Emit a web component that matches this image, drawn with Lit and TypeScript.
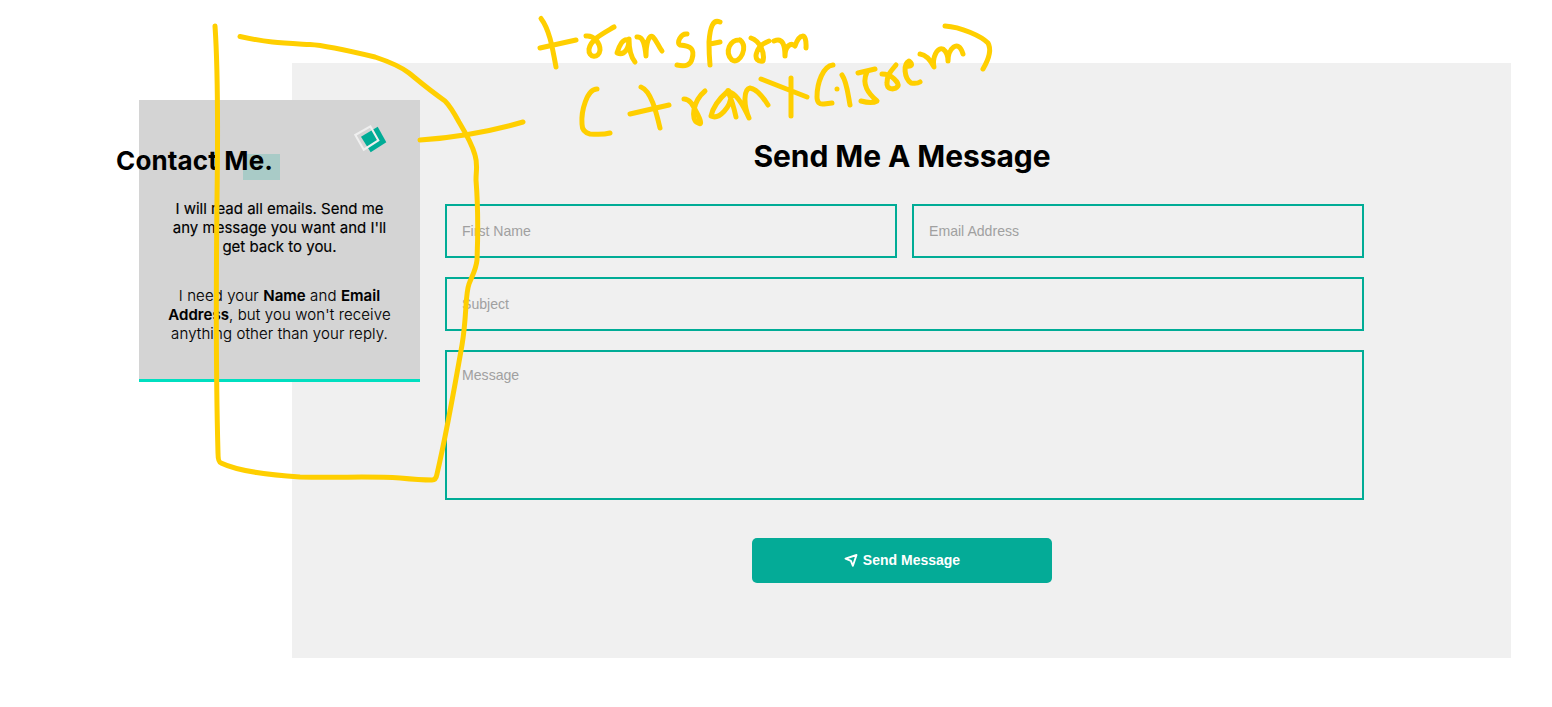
import { LitElement, html, css } from "lit";
import { customElement } from "lit/decorators.js";

@customElement("app-root")
export class AppRoot extends LitElement {
  static styles = css`
    :host { display: block; position: relative; height: 707px; overflow: hidden; background: #fff; color: #000; font-family: Inter, sans-serif; }
    * { box-sizing: border-box; }
    .page { padding: 63px 41px 0 292px; }
    .contact { display: flex; align-items: flex-start; height: 595px; background: #f0f0f0; }
    .card { flex: none; width: 281px; height: 282px; margin: 37px 25px 0 -153px; padding: 25px 28px 0; background: #d4d4d4; border-bottom: 3px solid #00dfc0; text-align: center; }
    .logo { display: block; width: 34px; height: 30px; margin: 0 0 0 186px; }
    .heading { display: flex; margin: -17px 0 0 -51px; height: 46px; }
    .heading h2 { position: relative; isolation: isolate; margin: 0; font-size: 26px; line-height: 46px; font-weight: 700; letter-spacing: .15px; white-space: nowrap; }
    .mark { position: absolute; z-index: -1; left: 127px; top: 16px; width: 37px; height: 26px; background: rgba(0, 172, 150, .2); }
    .card p { margin: 0 -5px; font-size: 15px; line-height: 19px; white-space: nowrap; }
    .card .lead { margin-top: 15px; font-weight: 400; -webkit-text-stroke: .15px #000; }
    .card .note { margin-top: 30px; font-weight: 300; letter-spacing: .12px; -webkit-text-stroke: .12px #000; }
    .note b { font-weight: 600; letter-spacing: .05px; }
    .form { width: 919px; padding-top: 73px; }
    .title { margin: 0 5px 28px 0; height: 40px; text-align: center; font-size: 30px; line-height: 40px; font-weight: 700; letter-spacing: -.08px; }
    .fields { display: grid; grid-template-columns: 1fr 1fr; column-gap: 15px; row-gap: 19px; }
    input, textarea { display: block; width: 100%; height: 54px; padding: 0 15px; border: 2px solid #00ac96; border-radius: 0; background: #f0f0f0; font: 14.1px "Liberation Sans", Arial, sans-serif; outline: none; resize: none; }
    textarea { height: 150px; padding-top: 15px; }
    .wide { grid-column: 1 / -1; }
    ::placeholder { color: #a0a0a0; opacity: 1; }
    .actions { display: flex; justify-content: center; margin: 38px 5px 0 0; }
    .send { display: flex; align-items: center; justify-content: center; gap: 4px; width: 300px; height: 45px; padding: 0 0 1px; border: 0; border-radius: 5px; background: #04ab97; color: #fff; font: bold 14px "Liberation Sans", Arial, sans-serif; }
    .send svg { width: 15px; height: 15px; }
    .ink { position: absolute; left: 0; top: 0; width: 1552px; height: 707px; pointer-events: none; fill: none; stroke: #ffcf00; stroke-width: 5; stroke-linecap: round; stroke-linejoin: round; }
  `;

  render() {
    return html`
      <main class="page">
        <section class="contact">
          <aside class="card">
            <svg class="logo" viewBox="353 125 34 30">
              <path d="M361 136.7 L377.7 126.7 L386.3 142.3 L370.7 152.2Z" fill="#00ac96"/>
              <path d="M355.3 135 L370.4 126.4 L378.3 140.3 L363.8 149.7Z" fill="none" stroke="#efefef" stroke-width="2.1"/>
            </svg>
            <div class="heading"><h2>Contact Me.<span class="mark"></span></h2></div>
            <p class="lead">I will read all emails. Send me<br>any message you want and I'll<br>get back to you.</p>
            <p class="note">I need your <b>Name</b> and <b>Email<br>Address</b>, but you won't receive<br>anything other than your reply.</p>
          </aside>
          <form class="form">
            <h1 class="title">Send Me A Message</h1>
            <div class="fields">
              <input placeholder="First Name">
              <input placeholder="Email Address">
              <input class="wide" placeholder="Subject">
              <textarea class="wide" placeholder="Message"></textarea>
            </div>
            <div class="actions">
              <button class="send" type="button">
                <svg viewBox="0 0 15 15"><path d="M1.500 5.700 L12.500 2 L8.900 12.800 L6.900 7.900Z" fill="none" stroke="#fff" stroke-width="1.9" stroke-linejoin="round"/></svg>
                <span>Send Message</span>
              </button>
            </div>
          </form>
        </section>
      </main>
      <svg class="ink" viewBox="0 0 1552 707">
        <path d="M215 26 C218 70 218 130 217 200 C216 290 216 380 218 453 Q218 462 221 463 C240 472 270 475 300 477 C340 478 370 476 400 478 Q420 480 432 480 Q436 480 437 474 C445 440 455 385 462 345 C467 315 465 295 469 284 C472 276 476 270 477 260 C478 235 478 205 476 180 C476 170 478 165 475 155 C472 144 465 132 459 122 C453 111 450 106 445 101 C428 89 420 82 409 73 C400 66 390 62 375 57 C350 51 320 45 310 44.500 C280 43 270 43 240 36.500"/>
        <path d="M420 140 C450 138 485 133 523 122"/>
        <path d="M541 18.500 C549 29 552 45 556 67 M540 48 L576 40"/>
        <path d="M586 36 C594 35 600 43 600 50 C599 59 588 58 589 49 C591 39 604 33 614 27"/>
        <path d="M628 40 C623 38 619 46 617 53 C625 56 629 48 629 39 C629 48 631 57 635 62 M637 37 C643 36 645 45 646 56 C646 43 649 34 653 37 C657 41 658 46 662 51"/>
        <path d="M687 34 C681 33 676 43 680 45 C691 46 695 49 692 59 Q690 68 677 65"/>
        <path d="M720 22 C713 19 710 27 709 42 Q709 54 710 65 M710 44 L720 42"/>
        <path d="M740 40 C730 39 724 52 732 60 C740 65 749 46 740 40"/>
        <path d="M751 38 C760 41 765 53 763 61 C752 63 754 47 769 41 M774 41 C783 37 785 46 785 56 C785 46 791 42 795 46 C799 34 807 31 806 48"/>
        <path d="M597 89 C587 89 581 111 582 124 Q582 132 590 134 Q603 135 610 133"/>
        <path d="M641 87 C651 91 656 111 660 128 M630 114 L669 105"/>
        <path d="M684 99 C691 99 694 108 698 115 C702 123 701 125 698 123 C690 120 693 101 705 91"/>
        <path d="M728 91 C720 98 713 107 711 116 C719 120 731 107 731 95 C729 89 727 90 728 92 C731 98 734 108 736 117 M729 92 C736 93 744 107 749 118 C743 104 744 89 750 88 C757 89 763 97 768 105"/>
        <path d="M761 79 L807 97 M791 78 V116"/>
        <path d="M833 65 C823 66 817 83 817 97 Q817 105 824 104 L832 103 M837 89 V89.010 M842 75 C847 82 848 95 850 105"/>
        <path d="M858 73 L875 69 M867 72 C861 85 869 94 877 101 Q872 104 861 101"/>
        <path d="M882 74 C892 74 899 83 898 86 C894 91 886 89 887 83 C887 75 891 71 896 65"/>
        <path d="M906 66 C911 67 914 65 909 61 C903 64 904 78 911 83 Q917 84 920 82"/>
        <path d="M920 54 C927 55 931 61 934 67 C932 58 937 47 943 49 C947 52 948 57 948 61 C948 49 958 38 963 54"/>
        <path d="M945 26 C961 27 981 36 988 43 Q993 52 983 69"/>
      </svg>
    `;
  }
}
